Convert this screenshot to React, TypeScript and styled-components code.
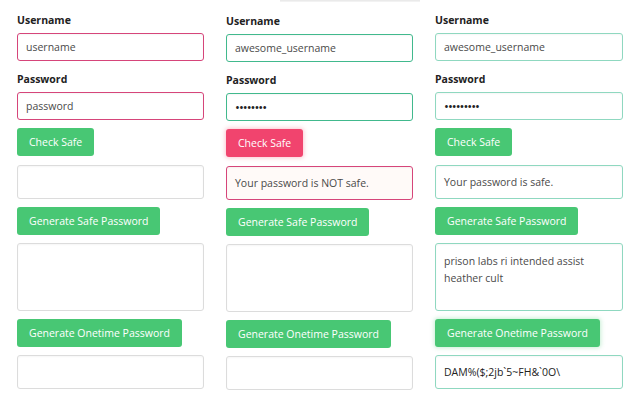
import React from "react";
import styled, { createGlobalStyle, css } from "styled-components";

const Global = createGlobalStyle`
  html, body { margin: 0; padding: 0; background: #ffffff; }
  body { font-family: "Open Sans", "Noto Sans", sans-serif; width: 640px; height: 400px; overflow: hidden; }
`;

type Tone = "danger" | "success" | "soft" | "plain";

const borderFor: Record<Tone, string> = {
  danger: "#d6457a",
  success: "#41b98d",
  soft: "#8fd8c0",
  plain: "#dcdcdc",
};

const Page = styled.div`
  position: relative;
  display: flex;
  padding-left: 17px;
  gap: 22px;
`;

const TopShade = styled.div`
  position: absolute;
  top: 0;
  left: 280px;
  width: 140px;
  height: 2px;
  background: linear-gradient(#e6e6e6, #f6f6f6);
`;

const Column = styled.div<{ $top: number; $width: number }>`
  display: flex;
  flex-direction: column;
  width: ${(p) => p.$width}px;
  padding-top: ${(p) => p.$top}px;
`;

const Label = styled.div<{ $first?: boolean }>`
  font-weight: 700;
  font-size: 10.5px;
  line-height: 14px;
  color: #222;
  margin-top: ${(p) => (p.$first ? 0 : 11)}px;
  margin-bottom: 6px;
`;

const Field = styled.div<{ $tone: Tone; $h: number; $bg?: string; $dark?: boolean }>`
  box-sizing: border-box;
  height: ${(p) => p.$h}px;
  border: 1px solid ${(p) => borderFor[p.$tone]};
  border-radius: 3px;
  background: ${(p) => p.$bg || "#fff"};
  display: flex;
  align-items: center;
  padding: 0 8px;
  font-size: 10.5px;
  color: ${(p) => (p.$dark ? "#222" : "#4a4a4a")};
  white-space: pre;
  box-shadow: inset 0 1px 2px rgba(10, 10, 10, 0.04);
`;

const Dots = styled.span`
  font-size: 13px;
  letter-spacing: -1px;
  color: #222;
`;

const Area = styled.div<{ $tone: Tone }>`
  box-sizing: border-box;
  height: 68px;
  border: 1px solid ${(p) => borderFor[p.$tone]};
  border-radius: 3px;
  background: #fff;
  padding: 9px 8px;
  font-size: 10.5px;
  line-height: 17px;
  color: #4a4a4a;
  box-shadow: inset 0 1px 2px rgba(10, 10, 10, 0.04);
`;

const Button = styled.div<{ $danger?: boolean; $glow?: boolean }>`
  align-self: flex-start;
  box-sizing: border-box;
  height: 28px;
  padding: 0 12px;
  display: flex;
  align-items: center;
  border-radius: 3px;
  font-size: 10.5px;
  color: #fff;
  background: ${(p) => (p.$danger ? "#f1446e" : "#48c774")};
  ${(p) =>
    p.$glow &&
    css`
      box-shadow: 0 0 4px 1px
        ${p.$danger ? "rgba(241, 70, 104, 0.3)" : "rgba(72, 199, 116, 0.3)"};
    `}
`;

const Gap = styled.div<{ $h: number }>`
  height: ${(p) => p.$h}px;
  flex: none;
`;

type ColProps = {
  top: number;
  width: number;
  inputTone: Tone;
  resultTone: Tone;
  boxTone: Tone;
  user: string;
  pass: React.ReactNode;
  checkDanger?: boolean;
  result?: string;
  resultBg?: string;
  area?: string;
  once?: string;
  glowCheck?: boolean;
  glowOnce?: boolean;
};

function FormColumn(p: ColProps) {
  return (
    <Column $top={p.top} $width={p.width}>
      <Label $first>Username</Label>
      <Field $tone={p.inputTone} $h={28}>{p.user}</Field>
      <Label>Password</Label>
      <Field $tone={p.inputTone} $h={28}>{p.pass}</Field>
      <Gap $h={8} />
      <Button $danger={p.checkDanger} $glow={p.glowCheck}>Check Safe</Button>
      <Gap $h={9} />
      <Field $tone={p.resultTone} $h={34} $bg={p.resultBg}>{p.result || ""}</Field>
      <Gap $h={8} />
      <Button>Generate Safe Password</Button>
      <Gap $h={8} />
      <Area $tone={p.boxTone}>{p.area || ""}</Area>
      <Gap $h={8} />
      <Button $glow={p.glowOnce}>Generate Onetime Password</Button>
      <Gap $h={8} />
      <Field $tone={p.boxTone} $h={34} $dark>{p.once || ""}</Field>
    </Column>
  );
}

export default function App() {
  return (
    <>
      <Global />
      <Page>
        <TopShade />
        <FormColumn
          top={13}
          width={187}
          inputTone="danger"
          resultTone="plain"
          boxTone="plain"
          user="username"
          pass="password"
        />
        <FormColumn
          top={14}
          width={187}
          inputTone="success"
          resultTone="danger"
          boxTone="plain"
          user="awesome_username"
          pass={<Dots>••••••••</Dots>}
          checkDanger
          glowCheck
          result="Your password is NOT safe."
          resultBg="#fffaf8"
        />
        <FormColumn
          top={13}
          width={188}
          inputTone="soft"
          resultTone="soft"
          boxTone="soft"
          user="awesome_username"
          pass={<Dots>•••••••••</Dots>}
          result="Your password is safe."
          area="prison labs ri intended assist heather cult"
          once={"DAM%($;2jb`5~FH&`0O\\"}
          glowOnce
        />
      </Page>
    </>
  );
}
